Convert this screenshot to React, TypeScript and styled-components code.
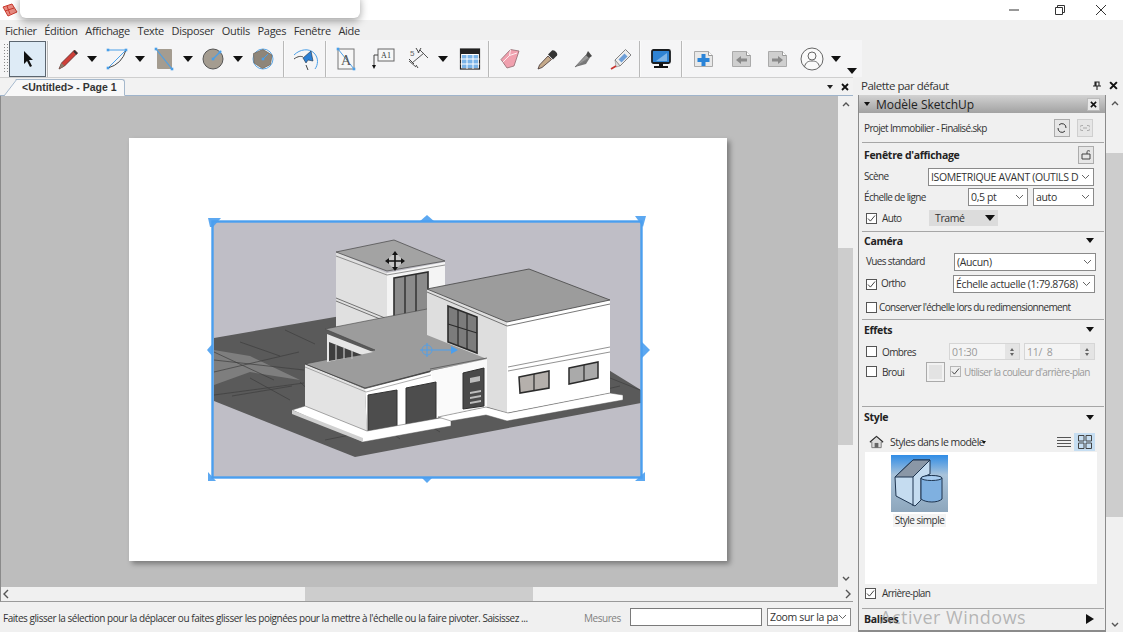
import React from "react";
import styled, { createGlobalStyle } from "styled-components";

const Global = createGlobalStyle`
  html, body { margin: 0; padding: 0; background: #f0f0f0; }
  #root { width: 1123px; height: 632px; overflow: hidden; }
  * { box-sizing: border-box; }
`;

const Window = styled.div`
  position: relative; width: 1123px; height: 632px; overflow: hidden; display: flex; flex-direction: column;
  background: #f0f0f0; color: #222; font-family: "Open Sans", "Noto Sans", sans-serif; font-size: 11px;
`;
const TitleBar = styled.div`
  height: 20px; background: #fff; display: flex; align-items: center; justify-content: space-between; padding-left: 2px; flex: none;
`;
const Popup = styled.div`
  position: absolute; left: 20px; top: -6px; width: 340px; height: 24px; background: #fff; border-radius: 6px;
  box-shadow: 0 3px 9px rgba(0,0,0,.38);
`;
const WinButtons = styled.div`display: flex;`;
const WinButton = styled.div<{ $w?: number; $pr?: number }>`
  width: ${p => p.$w ?? 46}px; height: 20px; padding-right: ${p => p.$pr ?? 0}px; display: flex; align-items: center; justify-content: center;
`;
const MenuBar = styled.div`
  height: 20px; flex: none; display: flex; align-items: center; padding-left: 5px; gap: 7.6px;
  font-size: 11px; letter-spacing: -.32px; color: #333;
`;
const Toolbar = styled.div`
  height: 37px; width: 862px; flex: none; display: flex; align-items: center; padding-left: 3px; background: #f5f5f6;
`;
const Grip = styled.div`
  width: 5px; height: 30px; margin-top: -2px;
  background-image: radial-gradient(#888 .7px, transparent .8px); background-size: 3px 3px;
`;
const SelectTool = styled.div`
  width: 37px; height: 36px; margin: 0 1px; border: 1px solid #5c6670; background: #deebf6;
  display: flex; align-items: center; justify-content: center;
`;
const Sep = styled.div`width: 2px; height: 36px; flex: none; border-left: 1px solid #b9b9b9; background: #fafafa;`;
const Tool = styled.div<{ $w: number }>`
  width: ${p => p.$w}px; height: 36px; flex: none; display: flex; align-items: center; justify-content: center;
`;
const Drop = styled.div<{ $w?: number; $end?: boolean }>`
  width: ${p => p.$w ?? 10}px; height: 36px; flex: none; display: flex; justify-content: center;
  align-items: ${p => (p.$end ? "flex-end" : "center")};
  padding-bottom: ${p => (p.$end ? "3px" : "0")};
  &::after { content: ""; border-left: 5.5px solid transparent; border-right: 5.5px solid transparent; border-top: 6px solid #111; }
`;
const Main = styled.div`flex: 1; display: flex; min-height: 0; margin-top: 0;`;
const LeftColumn = styled.div`width: 853px; flex: none; display: flex; flex-direction: column; margin-right: 5px;`;
const TabRow = styled.div`
  height: 19px; flex: none; position: relative; display: flex; align-items: flex-end; padding-left: 4px;
  border-top: 1px solid #cfcfcf; border-bottom: 1px solid #9fb4cb; background: #f2f2f2;
`;
const Tab = styled.div`
  width: 121px; height: 17px; margin-bottom: -1px; background: #f8f8f8; border: 1px solid #a5b8cc; border-bottom: 1px solid #f8f8f8;
  border-radius: 3px 3px 0 0; clip-path: polygon(12px 0, 100% 0, 100% 100%, 0 100%);
  font-family: "Liberation Sans", sans-serif; font-size: 10.5px; font-weight: 700; color: #333; padding: 1px 0 0 17px; white-space: nowrap;
`;
const TabSlant = styled.svg`position: absolute; left: 4px; bottom: -1px;`;
const TabTools = styled.div`
  margin-left: auto; height: 17px; width: 26px; display: flex; align-items: center; justify-content: space-between; padding-right: 4px;
  &::before { content: ""; border-left: 3.5px solid transparent; border-right: 3.5px solid transparent; border-top: 4px solid #222; }
`;
const CanvasRow = styled.div`flex: 1; display: flex; min-height: 0; border-left: 1px solid #8a8a8a;`;
const Canvas = styled.div`flex: 1; background: #bdbdbd; padding: 42px 0 0 128px; min-width: 0;`;
const Paper = styled.div`
  width: 598px; height: 423px; background: #fff; padding: 72px 0 0 76px; box-shadow: 3px 3px 5px rgba(0,0,0,.35);
`;
const ScrollV = styled.div`
  width: 15px; flex: none; background: #f0f0f0; display: flex; flex-direction: column; align-items: center; padding: 3px 0;
`;
const ThumbV = styled.div`
  width: 100%; height: 197px; margin-top: 139px; margin-bottom: auto; background: #cdcdcd;
`;
const ScrollH = styled.div`
  height: 15px; flex: none; background: #f0f0f0; display: flex; align-items: center; border-left: 1px solid #8a8a8a; border-bottom: 1px solid #9a9a9a;
`;
const ThumbH = styled.div`width: 228px; height: 100%; margin-left: 294px; margin-right: auto; background: #cdcdcd;`;
const StatusBar = styled.div`
  height: 30px; flex: none; display: flex; align-items: center; width: 853px; padding: 0 2px 0 3px;
  font-size: 10px; letter-spacing: -.46px; color: #333;
`;
const StatusText = styled.div`width: 581px; white-space: nowrap; flex: none; padding-top: 1px;`;
const Mesures = styled.div`width: 46px; color: #808080; flex: none; padding-top: 1px;`;
const MeasureBox = styled.div`width: 132px; height: 18px; background: #fff; border: 1px solid #7a7a7a; flex: none; margin-right: 5px;`;
const RightColumn = styled.div`flex: 1; display: flex; flex-direction: column; min-width: 0;`;
const TrayTitle = styled.div`
  height: 18px; flex: none; display: flex; align-items: center; padding: 0 5px 2px 3px; justify-content: space-between;
  font-size: 11.5px; letter-spacing: -.48px; color: #333;
`;
const TrayIcons = styled.div`display: flex; align-items: center; gap: 8px;`;
const TrayBody = styled.div`flex: 1; display: flex; min-height: 0;`;
const Panel = styled.div`
  width: 248px; flex: none; border: 1px solid #8b8b8b; border-top: 0; border-bottom: 2px solid #8b8b8b; display: flex; flex-direction: column; position: relative;
`;
const PanelHead = styled.div`
  height: 18px; flex: none; background: linear-gradient(#d2d2d2, #a2a2a2); display: flex; align-items: center; padding: 0 4px 0 5px; gap: 6px;
  font-size: 12px; letter-spacing: 0; color: #222;
`;
const HeadClose = styled.div`
  margin-left: auto; width: 13px; height: 13px; background: #e8e8e8; border: 1px solid #bbb; display: flex; align-items: center; justify-content: center; margin-right: 1px;
`;
const Tri = styled.span<{ $dir?: "down" | "right"; $s?: number }>`
  display: inline-block; width: 0; height: 0;
  ${p => p.$dir === "right"
    ? `border-top: 5px solid transparent; border-bottom: 5px solid transparent; border-left: 8px solid #111;`
    : `border-left: ${p.$s ?? 5}px solid transparent; border-right: ${p.$s ?? 5}px solid transparent; border-top: ${(p.$s ?? 5) + 1}px solid #111;`}
`;
const Row = styled.div<{ $h: number; $mt?: number; $px?: number }>`
  height: ${p => p.$h}px; margin-top: ${p => p.$mt ?? 0}px; flex: none; display: flex; align-items: center; padding: 0 ${p => p.$px ?? 5}px;
  font-size: 10px; letter-spacing: -.64px; color: #333; white-space: nowrap;
`;
const Divider = styled.div<{ $mt?: number }>`height: 1px; flex: none; background: #a6a6a6; margin: ${p => p.$mt ?? 0}px 1px 0 3px;`;
const SectionHead = styled(Row)`
  font-weight: 700; font-size: 10.5px; color: #222; letter-spacing: -.3px; justify-content: space-between; padding-right: 11px;
`;
const Label = styled.span<{ $w?: number; $ml?: number; $muted?: boolean; $up?: boolean }>`
  flex: none; display: inline-block; width: ${p => (p.$w ? `${p.$w}px` : "auto")}; margin-left: ${p => p.$ml ?? 0}px;
  padding-bottom: ${p => (p.$up ? "3px" : "0")};
  color: ${p => (p.$muted ? "#9a9a9a" : "inherit")};
`;
const SelectBox = styled.div<{ $w: number; $ml?: number }>`
  width: ${p => p.$w}px; height: 18px; flex: none; margin-left: ${p => p.$ml ?? 0}px; background: #fff; border: 1px solid #8a8a8a;
  display: flex; align-items: center; justify-content: space-between; padding: 0 3px 0 2px; overflow: hidden; color: #333; font-size: 10.5px; letter-spacing: -.36px;
`;
const SelectText = styled.span`overflow: hidden; flex: 1; min-width: 0; white-space: nowrap;`;
const Check = styled.span<{ $muted?: boolean; $ml?: number }>`
  width: 11px; height: 11px; flex: none; margin-left: ${p => p.$ml ?? 2}px; background: ${p => (p.$muted ? "#efefef" : "#fff")};
  border: 1px solid ${p => (p.$muted ? "#b6b6b6" : "#555")}; display: flex; align-items: center; justify-content: center;
`;
const SmallBtn = styled.div<{ $ml?: number; $off?: boolean }>`
  width: 16px; height: 18px; flex: none; margin-left: ${p => p.$ml ?? 0}px; border: 1px solid ${p => (p.$off ? "#cfcfcf" : "#acacac")};
  background: #e6e6e6; display: flex; align-items: center; justify-content: center;
`;
const Render = styled.div`
  width: 69px; height: 16px; flex: none; margin-left: 15px; background: #dcdcdc; display: flex; align-items: center; justify-content: space-between; padding: 0 3px 0 6px; font-size: 10.5px; letter-spacing: -.4px;
`;
const Spin = styled.div<{ $w: number; $ml?: number }>`
  width: ${p => p.$w}px; height: 17px; flex: none; margin-left: ${p => p.$ml ?? 0}px; background: #f4f4f4; border: 1px solid #d6d6d6;
  display: flex; align-items: center; justify-content: space-between; color: #9a9a9a; padding-left: 2px; font-size: 10.5px; letter-spacing: -.3px;
`;
const SpinArrows = styled.div`
  width: 14px; height: 100%; background: #e4e4e4; display: flex; flex-direction: column; align-items: center; justify-content: center; gap: 2px;
  &::before { content: ""; border-left: 2.5px solid transparent; border-right: 2.5px solid transparent; border-bottom: 3px solid #666; }
  &::after { content: ""; border-left: 2.5px solid transparent; border-right: 2.5px solid transparent; border-top: 3px solid #666; }
`;
const Swatch = styled.div`
  width: 19px; height: 20px; flex: none; margin-left: 19px; border: 1px solid #aaa; background: #e3e3e3; box-shadow: inset 0 0 0 2px #f2f2f2;
`;
const StyleBar = styled(Row)`font-size: 10.5px; letter-spacing: -.55px;`;
const ViewToggle = styled.div<{ $on?: boolean; $ml?: number }>`
  width: 21px; height: 18px; flex: none; margin-left: ${p => p.$ml ?? 0}px; background: ${p => (p.$on ? "#c6def2" : "transparent")};
  display: flex; align-items: center; justify-content: center;
`;
const StyleList = styled.div`
  height: 132px; flex: none; margin: 0 8px 0 6px; background: #fff; padding: 3px 0 0 26px;
`;
const StyleItem = styled.div`width: 57px; display: flex; flex-direction: column; align-items: center; font-size: 10px; letter-spacing: -.5px; color: #333;`;
const StyleCaption = styled.span`margin-top: 2px; background: #f3f3f3; padding: 0 2px; white-space: nowrap; line-height: 13px;`;
const Watermark = styled.div`
  position: absolute; left: 21px; bottom: 1px; font-family: "Open Sans", sans-serif; font-size: 18px; color: rgba(130,130,130,.55); letter-spacing: .5px; white-space: nowrap;
`;
const TrayScroll = styled.div`
  flex: 1; background: #f0f0f0; display: flex; flex-direction: column; align-items: center; justify-content: space-between; padding: 3px 0 2px;
`;
const TrayThumb = styled.div`width: 100%; height: 364px; background: #cdcdcd; margin-top: 44px; margin-bottom: 102px;`;

const Chevron = ({ c = "#666" }: { c?: string }) => (
  <svg width="9" height="6" viewBox="0 0 9 6"><path d="M1 1l3.5 3.5L8 1" fill="none" stroke={c} strokeWidth="1" /></svg>
);
const Chev = ({ d, c = "#555" }: { d: string; c?: string }) => (
  <svg width="10" height="10" viewBox="0 0 10 10" style={{ flex: "none" }}><path d={d} fill="none" stroke={c} strokeWidth="1.4" /></svg>
);
const Tick = () => (
  <svg width="9" height="9" viewBox="0 0 9 9"><path d="M1 4.5l2.4 2.6L8 1.5" fill="none" stroke="#444" strokeWidth="1" /></svg>
);
const X = ({ s = 8 }: { s?: number }) => (
  <svg width={s} height={s} viewBox="0 0 8 8"><path d="M1 1l6 6M7 1L1 7" stroke="#111" strokeWidth="1.8" /></svg>
);
const B = "#4a9fe8";
const Ic = ({ children, w = 28, h = 28 }: { children: React.ReactNode; w?: number; h?: number }) => (
  <svg width={w} height={h} viewBox={`0 0 ${w} ${h}`}>{children}</svg>
);
const Dot = ({ x, y }: { x: number; y: number }) => <rect x={x - 1.3} y={y - 1.3} width="2.6" height="2.6" fill={B} />;

const Logo = () => (
  <svg width="16" height="16" viewBox="0 0 16 16">
    <path d="M1 5l9-3 5 8-9 4z" fill="#e78a80" stroke="#c9392d" />
    <path d="M5 4l3 8M3 9l9-3" stroke="#c9392d" fill="none" />
  </svg>
);
const Arrow = () => (
  <svg width="14" height="20" viewBox="0 0 14 20"><path d="M3 2v13l3-3 3 6 2-1-3-6h4z" fill="#111" /></svg>
);
const Pencil = () => (
  <Ic><path d="M5 24l2.500-6L20.500 5l3 3L10.500 21z" fill="#cf3f38" stroke="#5b2a28" strokeWidth=".8" /><path d="M5 24l2.500-6 3 3z" fill="#8a7a68" /><path d="M20 6l3 3" stroke="#333" strokeWidth="1.800" /></Ic>
);
const ArcIcon = () => (
  <Ic><path d="M5 23A26 26 0 0 0 23 5" fill="none" stroke="#444" strokeWidth="1" /><path d="M5 5h18L5 23" fill="none" stroke={B} strokeWidth="1" /><Dot x={5} y={5} /><Dot x={23} y={5} /><Dot x={5} y={23} /></Ic>
);
const RectIcon = () => (
  <Ic><rect x="8" y="4" width="15" height="20" rx="1" fill="#a49c90" /><path d="M7 4l16 20" stroke={B} strokeWidth="1.2" /><Dot x={7} y={4} /><Dot x={23} y={24} /></Ic>
);
const CircleIcon = () => (
  <Ic><circle cx="14" cy="14" r="10" fill="#a49c90" stroke="#555" /><path d="M14 14L22 6" stroke={B} strokeWidth="1.2" /><Dot x={14} y={14} /><Dot x={21} y={7} /></Ic>
);
const PolyIcon = () => (
  <Ic><circle cx="14" cy="14" r="10" fill="none" stroke={B} strokeWidth=".9" /><path d="M14 4.500l9 5.500-1.500 9.500-8 4-8.500-5.500-.5-9.500z" fill="#8e8579" stroke="#6a6258" strokeWidth=".7" /><path d="M14 14l5-5" stroke={B} /><Dot x={14} y={14} /></Ic>
);
const FollowIcon = () => (
  <Ic><path d="M3 10C9 4 18 3 23 8s4 12 1 16" fill="none" stroke={B} strokeWidth="1" /><path d="M3 14c4-3 7-3 9-2M15 20l2 5" fill="none" stroke="#444" /><path d="M12 13l8-7 2 10-5-1-2 3z" fill="#2a7fd4" stroke="#234" strokeWidth=".6" /></Ic>
);
const TextIcon = () => (
  <Ic><rect x="6" y="4" width="16" height="20" fill="#f7f7f7" stroke="#777" /><path d="M6 4l16 20" stroke={B} /><Dot x={6} y={4} /><Dot x={22} y={24} /><text x="14" y="20" textAnchor="middle" fontFamily="Liberation Serif" fontSize="14" fill="#555">A</text></Ic>
);
const LabelIcon = () => (
  <Ic><rect x="9" y="4" width="16" height="12" fill="#f7f7f7" stroke="#666" /><path d="M5 10h4M5 10v12" stroke="#444" fill="none" /><path d="M3 20h4l-2 4z" fill="#111" /><text x="17" y="13" textAnchor="middle" fontFamily="Liberation Serif" fontSize="8" fill="#333">A1</text></Ic>
);
const DimIcon = () => (
  <Ic><path d="M5 16l7 6M8 18L20 8M16 5l8 8" fill="none" stroke="#555" /><path d="M5 14l5 5M12 20l2 3" stroke="#444" fill="none" /><text x="6" y="11" fontFamily="Liberation Sans" fontSize="8" fill="#666">5</text><path d="M12 3l3 5M17 3l-3 5" stroke="#444" /></Ic>
);
const TableIcon = () => (
  <Ic><rect x="4.500" y="4" width="19" height="20" fill="#fff" stroke="#222" strokeWidth="1.2" /><rect x="4.500" y="4" width="19" height="5" fill="#222" /><path d="M6 10h16v13H6z" fill="#7ab4e8" /><path d="M4.500 14h19M4.500 19h19M11 9v15M17 9v15" stroke="#fff" strokeWidth="1" /></Ic>
);
const Eraser = () => (
  <Ic><path d="M5 14.500L14.500 4.500 23 6 18 21l-7 2z" fill="#f0a0ae" stroke="#8f6a70" strokeWidth=".8" /><path d="M14.500 4.500l-1 6-7 7M13.500 10.500L21 8" stroke="#fff" fill="none" strokeWidth=".8" /></Ic>
);
const Dropper = () => (
  <Ic><path d="M4 24l1.500-4L14 11l3.500 3.500L8 22.500z" fill="#c4a98a" stroke="#433" strokeWidth=".8" /><path d="M14 9.500l5 5 4-4c1.500-2-3-6.500-5-5z" fill="#333" /></Ic>
);
const Knife = () => (
  <Ic><path d="M5 22L16 10l3 3z" fill="#999" stroke="#555" strokeWidth=".6" /><path d="M5 22l14-9 2-2-5 8z" fill="#777" /><path d="M16 10l2-4 4 5-3 2z" fill="#4a4a4a" /></Ic>
);
const Glue = () => (
  <Ic><path d="M9 15L19.500 4.500 25 10 14 21z" fill="#eee" stroke="#666" strokeWidth=".8" /><path d="M12.500 14.500l6-6 3 3-6 6z" fill="#6e9fd8" /><path d="M9 15l5 6-4 1z" fill="#ddd" stroke="#777" strokeWidth=".5" /><path d="M5 24l5-3" stroke="#c9332e" strokeWidth="1.800" /></Ic>
);
const Monitor = () => (
  <Ic><rect x="5" y="5" width="18" height="13" rx="1.500" fill="#2f83d3" stroke="#1a1d20" strokeWidth="1.800" /><path d="M9 16l11-8v8z" fill="#7fb5e6" /><path d="M12 18.500h4v3h-4z" fill="#111" /><path d="M7 21h14v2H7z" fill="#111" /></Ic>
);
const Page = ({ fill, sym }: { fill: string; sym: React.ReactNode }) => (
  <Ic>
    <path d="M5.500 6.500h14l4 4v11h-18z" fill={fill} stroke="#aaa" />
    <path d="M19.500 6.500v4h4" fill="#fff" stroke="#999" />
    {sym}
  </Ic>
);
const Person = () => (
  <Ic w={26} h={26}><circle cx="13" cy="13" r="11" fill="#fafafa" stroke="#666" /><circle cx="13" cy="10" r="4" fill="none" stroke="#666" /><path d="M5.500 21c1-5 4-6 7.500-6s6.500 1 7.500 6" fill="none" stroke="#666" /></Ic>
);
const Pin = () => (
  <svg width="8" height="9" viewBox="0 0 8 9"><path d="M2 1h4v4H2zM0 5h8M4 5v4M3 1v4" fill="none" stroke="#222" strokeWidth="1.1" /></svg>
);
const House = () => (
  <svg width="16" height="14" viewBox="0 0 16 14"><path d="M8 1L1 7h2v6h10V7h2z" fill="#ddd" stroke="#777" /><path d="M6 13V8h4v5z" fill="#666" /><path d="M1 7l7-6 7 6" fill="none" stroke="#333" strokeWidth="1.2" /></svg>
);
const ListIcon = () => (
  <svg width="14" height="13" viewBox="0 0 14 13"><path d="M0 1.500h14M0 4.500h14M0 7.500h14M0 10.500h14" stroke="#555" /></svg>
);
const GridIcon = () => (
  <svg width="14" height="14" viewBox="0 0 14 14"><path d="M.5.5h5.500v5.500H.5zM8 .5h5.500v5.500H8zM.5 8h5.500v5.500H.5zM8 8h5.500v5.500H8z" fill="none" stroke="#444" /></svg>
);
const StyleThumb = () => (
  <svg width="57" height="57" viewBox="0 0 57 57">
    <defs><linearGradient id="sky" x1="0" y1="0" x2="0" y2="1"><stop offset="0" stopColor="#2f8ce6" /><stop offset=".35" stopColor="#a9c3da" /><stop offset="1" stopColor="#8da6bc" /></linearGradient></defs>
    <rect width="57" height="57" fill="url(#sky)" />
    <path d="M4 22L22 5h17v14l-9 4v22l-6 6L5 41z" fill="#c5dcf0" stroke="#1e3550" />
    <path d="M4 22L22 5h17L22 22z" fill="#8a97a6" stroke="#1e3550" />
    <path d="M22 22v29" fill="none" stroke="#1e3550" />
    <path d="M30 23c5-3 17-3 21 0v21c-4 4-16 4-21 0z" fill="#7fb0e0" stroke="#1e3550" />
    <ellipse cx="40.500" cy="23" rx="10.500" ry="2.500" fill="#a9cdf0" stroke="#1e3550" />
  </svg>
);

const H = "#4a9fef";
const Handle = ({ d }: { d: string }) => <path d={d} fill={H} opacity=".9" />;
const Model = () => (
  <svg width="445" height="275" viewBox="205 210 445 275" style={{ display: "block" }}>
    <rect x="213" y="222" width="429" height="256" fill="#bfbec6" />
    {/* ground */}
    <path d="M214 338L335 317L440 300L560 340L641 390V403L355 457L214 401Z" fill="#5a5a5a" />
    <path d="M214 350L250 356L300 380L250 372L214 385Z" fill="#7e7e7e" />
    <path d="M214 352l60 28M214 360l90 10M214 372l85-20M214 395l90-12M250 378l40 22M240 342l40 14M285 330l30 14M232 396l60-10M300 382l30 28M325 440l60-12M385 427l15 12M440 432l-20-12M560 400l60-14M610 378l30 12" stroke="#3e3e3e" strokeWidth=".7" fill="none" />
    {/* rear tower */}
    <path d="M336 252L387 273V322L336 327Z" fill="#e0e0e0" />
    <path d="M387 273L445 262V310L387 322Z" fill="#f4f4f4" />
    <path d="M336 252L394 240L445 261L387 271Z" fill="#a3a3a3" stroke="#444" strokeWidth=".7" />
    <path d="M336 256L387 275L445 265" fill="none" stroke="#666" strokeWidth=".7" />
    <path d="M336 298L385 318M336 301L385 321" stroke="#555" strokeWidth=".8" />
    <path d="M394 278L428 272V316L394 322Z" fill="#8b8b8b" stroke="#2e2e2e" strokeWidth="1.6" />
    <path d="M405 276V320M416 274V318" stroke="#2e2e2e" strokeWidth="1.4" />
    {/* lower roof / L volume */}
    <path d="M325 329L427 309L490 345L488 360L430 371L365 389L305 364L375 350Z" fill="#9c9c9c" stroke="#444" strokeWidth=".6" />
    <path d="M327 334L373 352L327 362Z" fill="#e6e6e6" />
    <path d="M329 342L362 355L329 361Z" fill="#3f3f3f" />
    <path d="M336 345v15M344 348v11M352 351v8" stroke="#bbb" strokeWidth="1.3" />
    {/* main block */}
    <path d="M427 289L507 322V413L487 407V359L427 335Z" fill="#dedede" />
    <path d="M507 322L610 300V393L507 413Z" fill="#fff" />
    <path d="M427 289L529 269L610 300L507 322Z" fill="#9c9c9c" stroke="#444" strokeWidth=".8" />
    <path d="M427 292L507 326L610 304" fill="none" stroke="#555" strokeWidth=".8" />
    <path d="M508 367L610 347M508 371L610 352" stroke="#777" strokeWidth=".8" />
    <path d="M448 306L477 317V353L448 342Z" fill="#7c7c7c" stroke="#2b2b2b" strokeWidth="1.6" />
    <path d="M458 310V346M467 314V349M448 324L477 333" stroke="#2b2b2b" strokeWidth="1.2" />
    <path d="M519 377L549 371V388L520 393Z" fill="#b5b0ac" stroke="#2b2b2b" strokeWidth="1.5" />
    <path d="M534 374V391" stroke="#2b2b2b" strokeWidth="1.2" />
    <path d="M569 368L598 362V378L569 384Z" fill="#aaa" stroke="#2b2b2b" strokeWidth="1.5" />
    <path d="M584 365V381" stroke="#2b2b2b" strokeWidth="1.2" />
    {/* entry */}
    <path d="M430 371L487 359V407L440 417L430 420Z" fill="#fafafa" />
    <path d="M430 369L487 358" stroke="#555" strokeWidth=".8" />
    <path d="M463 373L484 368V406L463 409Z" fill="#4a4a4a" stroke="#2e2e2e" />
    <path d="M470 378l10-2v5l-10 2zM470 392l11-2v2l-11 2zM470 397l11-2v2l-11 2zM470 402l11-2v2l-11 2z" fill="#bdbdbd" />
    {/* garage */}
    <path d="M305 364L365 389L367 433L305 410Z" fill="#e3e3e3" />
    <path d="M365 389L431 372L440 417L367 433Z" fill="#fff" />
    <path d="M305 364L365 388L431 371" fill="none" stroke="#444" strokeWidth=".9" />
    <path d="M305 367L366 392L431 375" fill="none" stroke="#777" strokeWidth=".6" />
    <path d="M368 395L397 390V427L368 433Z" fill="#4d4d4d" stroke="#333" />
    <path d="M406 388L436 382V420L406 426Z" fill="#4d4d4d" stroke="#333" />
    {/* plinths */}
    <path d="M292 410L305 406L367 431L451 416V426L363 442Z" fill="#fff" stroke="#555" strokeWidth=".5" />
    <path d="M292 410L363 438V442L292 414Z" fill="#d0d0d0" />
    <path d="M438 417L486 407L508 413L610 393L623 395V400L507 421L486 415L451 421Z" fill="#fff" stroke="#555" strokeWidth=".5" />
    {/* selection */}
    <rect x="212.500" y="221.500" width="429" height="256" fill="none" stroke={H} strokeWidth="2.400" />
    <Handle d="M208 218h13l-8 9h-3z" />
    <Handle d="M635 216h11l-3 11z" />
    <Handle d="M208 481v-9l8 9z" />
    <Handle d="M645 481h-10l10-9z" />
    <Handle d="M419 222l8-7 8 7z" />
    <Handle d="M421 477h12l-6 6z" />
    <Handle d="M213 343l-6 7 6 7z" />
    <Handle d="M641 341l9 9-9 9z" />
    <circle cx="427" cy="350" r="5" fill="none" stroke={H} strokeWidth=".8" />
    <path d="M420 350h36M427 343v14" stroke={H} strokeWidth="1" />
    <path d="M451 346l7 4-7 4z" fill={H} />
    {/* move cursor */}
    <path d="M395 252l9 9-9 9-9-9z" fill="#ddd" opacity=".6" />
    <path d="M395 253v16M387 261h16" stroke="#111" strokeWidth="1.6" />
    <path d="M395 251l3 4h-6zM395 271l3-4h-6zM385 261l4-3v6zM405 261l-4-3v6z" fill="#111" />
  </svg>
);

export default function App() {
  return (
    <Window>
      <Global />
      <TitleBar>
        <Logo />
        <WinButtons>
          <WinButton><svg width="10" height="10" viewBox="0 0 10 10"><path d="M0 5h10" stroke="#333" /></svg></WinButton>
          <WinButton><svg width="10" height="10" viewBox="0 0 10 10"><path d="M.5 2.500h7v7h-7zM2.500 2.500v-2h7v7h-2" fill="none" stroke="#333" /></svg></WinButton>
          <WinButton $w={40} $pr={4}><svg width="10" height="10" viewBox="0 0 10 10"><path d="M0 0l10 10M10 0L0 10" stroke="#333" /></svg></WinButton>
        </WinButtons>
      </TitleBar>
      <Popup />
      <MenuBar>
        {["Fichier", "Édition", "Affichage", "Texte", "Disposer", "Outils", "Pages", "Fenêtre", "Aide"].map(m => <span key={m}>{m}</span>)}
      </MenuBar>
      <Toolbar>
        <Grip />
        <SelectTool><Arrow /></SelectTool>
        <Sep />
        <Tool $w={38}><Pencil /></Tool><Drop />
        <Tool $w={40}><ArcIcon /></Tool><Drop $w={6} />
        <Tool $w={40}><RectIcon /></Tool><Drop />
        <Tool $w={40}><CircleIcon /></Tool><Drop />
        <Tool $w={40}><PolyIcon /></Tool>
        <Sep />
        <Tool $w={40}><FollowIcon /></Tool>
        <Sep />
        <Tool $w={38}><TextIcon /></Tool>
        <Tool $w={36}><LabelIcon /></Tool>
        <Tool $w={34}><DimIcon /></Tool><Drop $w={16} />
        <Tool $w={37}><TableIcon /></Tool>
        <Sep />
        <Tool $w={39}><Eraser /></Tool>
        <Tool $w={38}><Dropper /></Tool>
        <Tool $w={34}><Knife /></Tool>
        <Tool $w={38}><Glue /></Tool>
        <Sep />
        <Tool $w={40}><Monitor /></Tool>
        <Sep />
        <Tool $w={40}><Page fill="#e8e8e8" sym={<path d="M12.500 9h4v4h4v4h-4v4h-4v-4h-4v-4h4z" fill="#2a84d8" />} /></Tool>
        <Tool $w={35}><Page fill="#cfcfcf" sym={<path d="M9 15l5-4v2.500h6v3h-6V19z" fill="#8a8a8a" />} /></Tool>
        <Tool $w={38}><Page fill="#cfcfcf" sym={<path d="M20 15l-5-4v2.500H9v3h6V19z" fill="#8a8a8a" />} /></Tool>
        <Tool $w={32}><Person /></Tool>
        <Drop $w={16} />
        <Drop $w={16} $end />
      </Toolbar>
      <Main>
        <LeftColumn>
          <TabRow>
            <Tab>&lt;Untitled&gt; - Page 1</Tab>
            <TabSlant width="13" height="17" viewBox="0 0 13 17"><path d="M0 17L13 0" stroke="#a5b8cc" fill="none" /></TabSlant>
            <TabTools><X /></TabTools>
          </TabRow>
          <CanvasRow>
            <Canvas>
              <Paper><Model /></Paper>
            </Canvas>
            <ScrollV>
              <Chev d="M2 7l3-3 3 3" />
              <ThumbV />
              <Chev d="M2 3l3 3 3-3" />
            </ScrollV>
          </CanvasRow>
          <ScrollH>
            <Chev d="M7 1L3 5l4 4" />
            <ThumbH />
            <Chev d="M3 1l4 4-4 4" />
          </ScrollH>
          <StatusBar>
            <StatusText>Faites glisser la sélection pour la déplacer ou faites glisser les poignées pour la mettre à l'échelle ou la faire pivoter. Saisissez ...</StatusText>
            <Mesures>Mesures</Mesures>
            <MeasureBox />
            <SelectBox $w={84}><SelectText>Zoom sur la page</SelectText><Chevron /></SelectBox>
          </StatusBar>
        </LeftColumn>
        <RightColumn>
          <TrayTitle>
            <span>Palette par défaut</span>
            <TrayIcons><Pin /><X s={9} /></TrayIcons>
          </TrayTitle>
          <TrayBody>
            <Panel>
              <PanelHead><Tri $s={3.5} />Modèle SketchUp<HeadClose><X s={7} /></HeadClose></PanelHead>
              <Row $h={29}>
                <Label $w={190}>Projet Immobilier - Finalisé.skp</Label>
                <SmallBtn>
                  <svg width="10" height="10" viewBox="0 0 10 10"><path d="M2 2A4 4 0 0 1 9 5M8 8A4 4 0 0 1 1 5" fill="none" stroke="#333" /></svg>
                </SmallBtn>
                <SmallBtn $ml={7} $off>
                  <svg width="10" height="6" viewBox="0 0 10 6"><path d="M3 .5H2a2.500 2.500 0 0 0 0 5h1M7 .5h1a2.500 2.500 0 0 1 0 5H7M3 3h4" fill="none" stroke="#aaa" /></svg>
                </SmallBtn>
              </Row>
              <Divider />
              <SectionHead $h={23}>
                Fenêtre d'affichage
                <SmallBtn $ml={0}>
                  <svg width="10" height="11" viewBox="0 0 10 11"><path d="M1 5h8v5H1zM6 5V2.500a1.800 1.800 0 0 1 3 0" fill="none" stroke="#444" /></svg>
                </SmallBtn>
              </SectionHead>
              <Row $h={18} $mt={2}>
                <Label $w={64} $up>Scène</Label>
                <SelectBox $w={166}><SelectText>ISOMETRIQUE AVANT (OUTILS D</SelectText><Chevron /></SelectBox>
              </Row>
              <Row $h={18} $mt={2}>
                <Label $w={104}>Échelle de ligne</Label>
                <SelectBox $w={60}><SelectText>0,5 pt</SelectText><Chevron /></SelectBox>
                <SelectBox $w={61} $ml={5}><SelectText>auto</SelectText><Chevron /></SelectBox>
              </Row>
              <Row $h={18} $mt={3}>
                <Check><Tick /></Check>
                <Label $ml={5} $w={32}>Auto</Label>
                <Render>Tramé<Tri $s={5} /></Render>
              </Row>
              <Divider $mt={4} />
              <SectionHead $h={17}>Caméra<Tri $s={4.5} /></SectionHead>
              <Row $h={18} $mt={4} $px={7}>
                <Label $w={88} $up>Vues standard</Label>
                <SelectBox $w={142}><SelectText>(Aucun)</SelectText><Chevron /></SelectBox>
              </Row>
              <Row $h={18} $mt={4}>
                <Check><Tick /></Check>
                <Label $ml={4} $w={72} $up>Ortho</Label>
                <SelectBox $w={142}><SelectText>Échelle actuelle (1:79.8768)</SelectText><Chevron /></SelectBox>
              </Row>
              <Row $h={14} $mt={7}>
                <Check />
                <Label $ml={2}>Conserver l'échelle lors du redimensionnement</Label>
              </Row>
              <Divider $mt={5} />
              <SectionHead $h={19}>Effets<Tri $s={4.5} /></SectionHead>
              <Row $h={17} $mt={4}>
                <Check />
                <Label $ml={5} $w={67}>Ombres</Label>
                <Spin $w={71}>01:30<SpinArrows /></Spin>
                <Spin $w={71} $ml={4}>11/&nbsp;&nbsp;8<SpinArrows /></Spin>
              </Row>
              <Row $h={21} $mt={1}>
                <Check />
                <Label $ml={5} $w={25}>Broui</Label>
                <Swatch />
                <Check $muted $ml={5}><Tick /></Check>
                <Label $ml={3} $muted>Utiliser la couleur d'arrière-plan</Label>
              </Row>
              <Divider $mt={24} />
              <SectionHead $h={20}>Style<Tri $s={4.5} /></SectionHead>
              <StyleBar $h={20} $mt={5} $px={10}>
                <House />
                <Label $ml={6} $w={92}>Styles dans le modèle</Label>
                <Tri $s={2.5} />
                <ViewToggle $ml={67}><ListIcon /></ViewToggle>
                <ViewToggle $on><GridIcon /></ViewToggle>
              </StyleBar>
              <StyleList>
                <StyleItem>
                  <StyleThumb />
                  <StyleCaption>Style simple</StyleCaption>
                </StyleItem>
              </StyleList>
              <Row $h={18}>
                <Check $ml={1}><Tick /></Check>
                <Label $ml={6}>Arrière-plan</Label>
              </Row>
              <Divider $mt={6} />
              <SectionHead $h={20}>Balises<Tri $dir="right" /></SectionHead>
              <Watermark>Activer Windows</Watermark>
            </Panel>
            <TrayScroll>
              <Chev d="M2 7l3-3 3 3" />
              <TrayThumb />
              <Chev d="M2 3l3 3 3-3" />
            </TrayScroll>
          </TrayBody>
        </RightColumn>
      </Main>
    </Window>
  );
}
